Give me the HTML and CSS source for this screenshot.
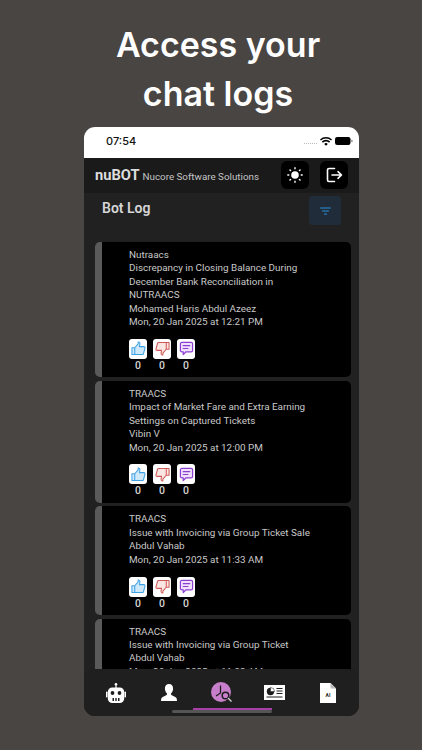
FILE: index.html
```html
<!DOCTYPE html>
<html lang="en">
<head>
  <meta charset="UTF-8" />
  <meta name="viewport" content="width=device-width, initial-scale=1.0"/>
  <title>Access your chat logs</title>
  <link rel="stylesheet" href="styles.css">
</head>
<body>

<!-- reaction icons, used once per card -->
<svg class="icon-defs" width="0" height="0">
  <symbol id="icon-like" viewBox="0 0 16 16">
    <path d="M1 7.200h3v7.300H1zM4 7.200 7.600 3V1.200c1.400-.3 2.200.8 1.900 2L9 6h4.700c1 0 1.500.9 1.200 1.700l-1.600 5.900c-.2.600-.7.900-1.300.9H4z" fill="#cfe9fb" stroke="#3fa2e6" stroke-width="1.100" stroke-linejoin="round"/>
  </symbol>
  <symbol id="icon-dislike" viewBox="0 0 16 16">
    <path d="M15 8.800h-3V1.500h3zM12 8.800 8.400 13v1.800c-1.400.3-2.200-.8-1.900-2L7 10H2.300c-1 0-1.500-.9-1.200-1.700l1.600-5.900c.2-.6.700-.9 1.300-.9H12z" fill="#fbe6e4" stroke="#cf5a55" stroke-width="1.100" stroke-linejoin="round"/>
  </symbol>
  <symbol id="icon-comment" viewBox="0 0 16 16">
    <path d="M3 1.500h10A1.500 1.500 0 0 1 14.500 3v7a1.500 1.500 0 0 1-1.500 1.500H7.500l-3 3v-3H3A1.500 1.500 0 0 1 1.500 10V3A1.500 1.500 0 0 1 3 1.500z" fill="#efe0fb" stroke="#8d3fd1" stroke-width="1.300" stroke-linejoin="round"/>
    <path d="M4.500 5h7M4.500 8h5" fill="none" stroke="#8d3fd1" stroke-width="1.300" stroke-linecap="round"/>
  </symbol>
</svg>

<h1 class="promo-title">Access your<br>chat logs</h1>

<div class="phone">
  <div class="status-bar">
    <span class="status-time">07:54</span>
    <div class="status-icons">
      <span class="status-dots"></span>
      <svg width="12" height="9" viewBox="0 0 12 9"><path d="M6 8.800 4.200 6.900a2.600 2.600 0 0 1 3.600 0zM2.900 5.700 1.800 4.500a6 6 0 0 1 8.400 0L9.100 5.700a4.400 4.400 0 0 0-6.200 0zM.9 3.500 0 2.500a8.500 8.500 0 0 1 12 0l-.9 1a7.200 7.200 0 0 0-10.200 0z" fill="#000"/></svg>
      <svg width="18" height="8" viewBox="0 0 18 8"><rect width="15.500" height="8" rx="2.200" fill="#000"/><rect x="16.300" y="2.700" width="1.200" height="2.600" rx=".6" fill="#888"/></svg>
    </div>
  </div>

  <header class="app-header">
    <div class="brand">
      <span class="brand-name">nuBOT</span>
      <span class="brand-company">Nucore Software Solutions</span>
    </div>
    <div class="header-actions">
      <button class="icon-btn">
        <svg width="16" height="16" viewBox="0 0 16 16" fill="#fff"><circle cx="8" cy="8" r="3.800"/><path d="M8 .8v1M8 14.200v1M.8 8h1M14.200 8h1M2.900 2.900l.7.7M12.400 12.400l.7.7M2.900 13.100l.7-.7M12.400 3.600l.7-.7" stroke="#fff" stroke-width="1.400" stroke-linecap="round"/></svg>
      </button>
      <button class="icon-btn">
        <svg width="17" height="16" viewBox="0 0 17 16" fill="none" stroke="#fff" stroke-width="1.600" stroke-linecap="round" stroke-linejoin="round"><path d="M8.500 1.500H3A1.500 1.500 0 0 0 1.500 3v10A1.500 1.500 0 0 0 3 14.500h5.500"/><path d="M6 8h9.500M12 4.700 15.500 8 12 11.300"/></svg>
      </button>
    </div>
  </header>

  <main class="content">
    <div class="page-head">
      <h2 class="page-title">Bot Log</h2>
      <button class="filter-btn">
        <svg width="11" height="8" viewBox="0 0 11 8" stroke="#2d8fdc" stroke-width="1.100" stroke-linecap="round"><path d="M.6 1h9.800M2.500 4h6M4.400 7h2.200"/></svg>
      </button>
    </div>

    <div class="log-list">
      <article class="log-card">
        <p>Nutraacs</p>
        <p>Discrepancy in Closing Balance During December Bank Reconciliation in NUTRAACS</p>
        <p>Mohamed Haris Abdul Azeez</p>
        <p>Mon, 20 Jan 2025 at 12:21 PM</p>
        <div class="reactions">
          <div class="reaction"><span class="reaction-icon"><svg><use href="#icon-like"/></svg></span><span class="reaction-count">0</span></div>
          <div class="reaction"><span class="reaction-icon"><svg><use href="#icon-dislike"/></svg></span><span class="reaction-count">0</span></div>
          <div class="reaction"><span class="reaction-icon"><svg><use href="#icon-comment"/></svg></span><span class="reaction-count">0</span></div>
        </div>
      </article>

      <article class="log-card">
        <p>TRAACS</p>
        <p>Impact of Market Fare and Extra Earning Settings on Captured Tickets</p>
        <p>Vibin V</p>
        <p>Mon, 20 Jan 2025 at 12:00 PM</p>
        <div class="reactions">
          <div class="reaction"><span class="reaction-icon"><svg><use href="#icon-like"/></svg></span><span class="reaction-count">0</span></div>
          <div class="reaction"><span class="reaction-icon"><svg><use href="#icon-dislike"/></svg></span><span class="reaction-count">0</span></div>
          <div class="reaction"><span class="reaction-icon"><svg><use href="#icon-comment"/></svg></span><span class="reaction-count">0</span></div>
        </div>
      </article>

      <article class="log-card">
        <p>TRAACS</p>
        <p>Issue with Invoicing via Group Ticket Sale</p>
        <p>Abdul Vahab</p>
        <p>Mon, 20 Jan 2025 at 11:33 AM</p>
        <div class="reactions">
          <div class="reaction"><span class="reaction-icon"><svg><use href="#icon-like"/></svg></span><span class="reaction-count">0</span></div>
          <div class="reaction"><span class="reaction-icon"><svg><use href="#icon-dislike"/></svg></span><span class="reaction-count">0</span></div>
          <div class="reaction"><span class="reaction-icon"><svg><use href="#icon-comment"/></svg></span><span class="reaction-count">0</span></div>
        </div>
      </article>

      <article class="log-card">
        <p>TRAACS</p>
        <p>Issue with Invoicing via Group Ticket</p>
        <p>Abdul Vahab</p>
        <p>Mon, 20 Jan 2025 at 11:32 AM</p>
      </article>
    </div>
  </main>

  <!-- bottom tabs sit over the scrolling list -->
  <nav class="tab-bar">
    <svg width="20" height="20" viewBox="0 0 20 20" fill="#fff"><circle cx="10" cy="1.300" r="1.300"/><rect x="9.400" y="2" width="1.200" height="3"/><rect x="1.800" y="4.500" width="16.400" height="15.500" rx="4.500"/><rect y="8.500" width="1.500" height="6" rx=".7"/><rect x="18.500" y="8.500" width="1.500" height="6" rx=".7"/><circle cx="6.500" cy="10" r="1.900" fill="#1f1f1f"/><circle cx="13.500" cy="10" r="1.900" fill="#1f1f1f"/><path d="M6.500 15H8v3H6.500zM9.300 15h1.400v3H9.300zM12 15h1.500v3H12z" fill="#1f1f1f"/></svg>
    <svg width="16" height="17" viewBox="0 0 18 19" fill="#fff" preserveAspectRatio="none"><path d="M9 0c2.900 0 4.600 2.100 4.600 5 0 2.200-.9 4.300-2.100 5.400-.4.400-.4 1.500.2 1.900L16 14.500c1.300.7 2 1.600 2 4.500H0c0-2.900.7-3.800 2-4.500l4.300-2.200c.6-.4.600-1.500.2-1.900C5.300 9.300 4.400 7.200 4.400 5 4.400 2.100 6.100 0 9 0z"/></svg>
    <svg width="21" height="21" viewBox="0 0 21 21"><circle cx="10" cy="10" r="10" fill="#c77fcb"/><path d="M9.500 3.500V11L5 14" fill="none" stroke="#1c1c1c" stroke-width="1.300"/><circle cx="14.500" cy="13.500" r="3.300" fill="#c77fcb" stroke="#1c1c1c" stroke-width="1.500"/><path d="M17 16l3.500 3.500" stroke="#ddd" stroke-width="1.300"/></svg>
    <svg width="21" height="15" viewBox="0 0 21 15"><rect width="21" height="15" fill="#fff"/><circle cx="6.500" cy="6.500" r="3.700" fill="#1c1c1c"/><path d="M6.500 6.500v-4a4 4 0 0 1 4 4z" fill="#fff" stroke="#1c1c1c" stroke-width=".5"/><path d="M12.500 3.500h6M12.500 6h6M12.500 8.500h6M2.500 12h16" stroke="#1c1c1c"/></svg>
    <svg width="16" height="20" viewBox="0 0 16 20"><path d="M0 0h10.500L16 5.500V20H0z" fill="#fff"/><path d="M10.500 0v5.500H16z" fill="#bbb"/><text class="doc-label" x="8" y="14" text-anchor="middle">AI</text></svg>
    <span class="home-bar"></span>
    <span class="tab-underline"></span>
  </nav>
</div>

</body>
</html>
```

FILE: styles.css
```css
* {
  box-sizing: border-box;
}

body {
  margin: 0;
  padding-top: 20px;
  background: #484543;
  font-family: 'Roboto', 'Liberation Sans', sans-serif;
  overflow: hidden;
}

p {
  margin: 0;
}

.icon-defs {
  display: block;
  height: 0;
}

.promo-title {
  margin: 0 0 9px;
  padding-left: 14px;
  text-align: center;
  font-family: 'Inter', sans-serif;
  font-size: 34px;
  line-height: 49px;
  font-weight: 600;
  color: #fff;
}

.phone {
  position: relative;
  width: 275px;
  height: 589px;
  margin-left: 84px;
  border-radius: 11px;
  overflow: hidden;
  background: #212121;
}

.status-bar {
  height: 31px;
  padding: 0 6px 3px 22px;
  background: #fff;
  display: flex;
  align-items: center;
  justify-content: space-between;
}

.status-time {
  font-family: 'Inter', sans-serif;
  font-size: 11px;
  font-weight: 500;
  color: #111;
}

.status-icons {
  display: flex;
  align-items: center;
  gap: 3px;
}

.status-dots {
  width: 13px;
  height: 1px;
  margin-top: 4px;
  border-top: 1px dotted #bbb;
}

.app-header {
  height: 35px;
  padding: 0 11px 1px;
  background: #1a1a1a;
  display: flex;
  align-items: center;
  justify-content: space-between;
}

.brand {
  display: flex;
  align-items: baseline;
  gap: 3px;
}

.brand-name {
  font-size: 14.7px;
  font-weight: 700;
  color: #ddd;
}

.brand-company {
  font-size: 9.8px;
  color: #c4c4c4;
}

.header-actions {
  display: flex;
  gap: 11px;
}

.icon-btn {
  width: 28px;
  height: 28px;
  padding: 0;
  border: none;
  border-radius: 6px;
  background: #000;
  display: flex;
  align-items: center;
  justify-content: center;
}

.content {
  padding: 0 8px 0 11px;
}

.page-head {
  height: 49px;
  padding: 3px 10px 0 7px;
  display: flex;
  align-items: flex-start;
  justify-content: space-between;
}

.page-title {
  margin: 4px 0 0;
  font-size: 14px;
  font-weight: 600;
  color: #d6d6d6;
}

.filter-btn {
  width: 32px;
  height: 29px;
  padding: 0;
  border: none;
  border-radius: 3px;
  background: #212c3a;
  display: flex;
  align-items: center;
  justify-content: center;
}

.log-list {
  display: flex;
  flex-direction: column;
  gap: 3.5px;
}

.log-card {
  padding: 6px 36px 5.5px 27px;
  background: #000;
  border-left: 7px solid #5a5a5a;
  border-radius: 5px;
  font-size: 9.9px;
  line-height: 13.4px;
  color: #c9c9c9;
}

.reactions {
  display: flex;
  gap: 6px;
  margin-top: 10.5px;
}

.reaction {
  display: flex;
  flex-direction: column;
  align-items: center;
  gap: 1px;
}

.reaction-icon {
  width: 18px;
  height: 20px;
  border-radius: 3px;
  background: #fff;
  display: flex;
  align-items: center;
  justify-content: center;
}

.reaction-icon svg {
  width: 15px;
  height: 15px;
}

.reaction-count {
  font-size: 10.5px;
  line-height: 12px;
  font-weight: 500;
  color: #d4d4d4;
}

.tab-bar {
  position: absolute;
  left: 0;
  right: 0;
  bottom: 0;
  height: 47px;
  padding: 0 0 0 5px;
  background: #1f1f1f;
  border-radius: 11px 11px 0 0;
  display: grid;
  grid-template-columns: repeat(5, 53px);
  justify-items: center;
  align-items: center;
}

.doc-label {
  font-family: 'Roboto', sans-serif;
  font-size: 5px;
  font-weight: 700;
  fill: #1c1c1c;
}

.home-bar {
  position: absolute;
  left: 88px;
  bottom: 3px;
  width: 100px;
  height: 3px;
  border-radius: 2px;
  background: #555;
}

.tab-underline {
  position: absolute;
  left: 109px;
  bottom: 6px;
  width: 79px;
  height: 2px;
  background: #a63fa8;
}
```
